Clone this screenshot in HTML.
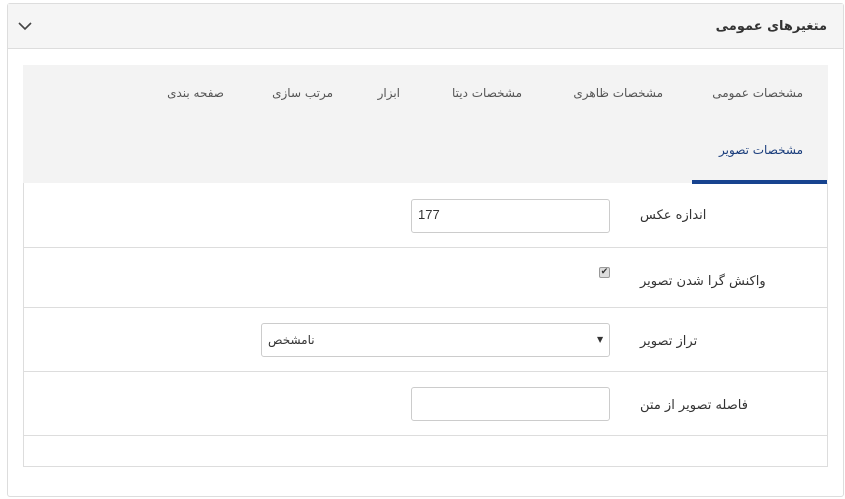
<!DOCTYPE html>
<html><head><meta charset="utf-8"><style>
*{box-sizing:border-box;margin:0;padding:0}
body{width:845px;height:499px;background:#fff;font-family:"DejaVu Sans","Liberation Sans",sans-serif;font-size:12px;color:#333;position:relative;overflow:hidden}
.a{position:absolute;white-space:nowrap;direction:rtl}
.panel{position:absolute;left:7px;top:3px;width:837px;height:494px;border:1px solid #ddd;border-radius:3px}
.head{position:absolute;left:8px;top:4px;width:835px;height:45px;background:#f5f5f5;border-bottom:1px solid #ddd}
.inner{position:absolute;left:23px;top:65px;width:805px;height:402px;border:1px solid #ddd}
.tabs{position:absolute;left:23px;top:65px;width:805px;height:118px;background:#f3f3f3}
.line{position:absolute;left:24px;width:803px;height:1px;background:#ddd}
.inp{position:absolute;border:1px solid #ccc;border-radius:3px;background:#fff}
</style></head><body>
<div class="panel"></div>
<div class="head"></div>
<svg class="a" style="left:17px;top:20px" width="16" height="12" viewBox="0 0 16 12"><path d="M2 3 L8 9 L14 3" fill="none" stroke="#444" stroke-width="1.6"/></svg>
<div class="a" style="right:18px;top:19px;font-weight:bold;font-size:13px;color:#333">متغیرهای عمومی</div>
<div class="inner"></div>
<div class="tabs"></div>
<div class="a" style="right:42px;top:86px;color:#555">مشخصات عمومی</div>
<div class="a" style="right:182px;top:86px;color:#555">مشخصات ظاهری</div>
<div class="a" style="right:323px;top:86px;color:#555">مشخصات دیتا</div>
<div class="a" style="right:445px;top:86px;color:#555">ابزار</div>
<div class="a" style="right:512px;top:86px;color:#555">مرتب سازی</div>
<div class="a" style="right:621px;top:86px;color:#555">صفحه بندی</div>
<div class="a" style="right:42px;top:143px;color:#1a3d7c">مشخصات تصویر</div>
<div style="position:absolute;left:692px;top:180px;width:135px;height:4px;background:#17438f"></div>
<div class="line" style="top:247px"></div>
<div class="line" style="top:307px"></div>
<div class="line" style="top:371px"></div>
<div class="line" style="top:435px"></div>
<div class="a" style="left:640px;top:208px;font-size:13px">اندازه عکس</div>
<div class="inp" style="left:411px;top:199px;width:199px;height:34px"></div>
<div class="a" style="left:418px;top:207px;font-family:'Liberation Sans';font-size:13px;direction:ltr">177</div>
<div class="a" style="left:640px;top:274px;font-size:13px">واکنش گرا شدن تصویر</div>
<div style="position:absolute;left:599px;top:267px;width:11px;height:11px;border:1px solid #999;border-radius:2px;background:#ddd;font-size:9px;line-height:9px;text-align:center;color:#333">✔</div>
<div class="a" style="left:640px;top:334px;font-size:13px">تراز تصویر</div>
<div class="inp" style="left:261px;top:323px;width:349px;height:34px"></div>
<div class="a" style="left:268px;top:333px;font-size:12px">نامشخص</div>
<div class="a" style="left:597px;top:335px;font-size:8px;color:#333">▼</div>
<div class="a" style="left:640px;top:398px;font-size:13px">فاصله تصویر از متن</div>
<div class="inp" style="left:411px;top:387px;width:199px;height:34px"></div>
</body></html>
